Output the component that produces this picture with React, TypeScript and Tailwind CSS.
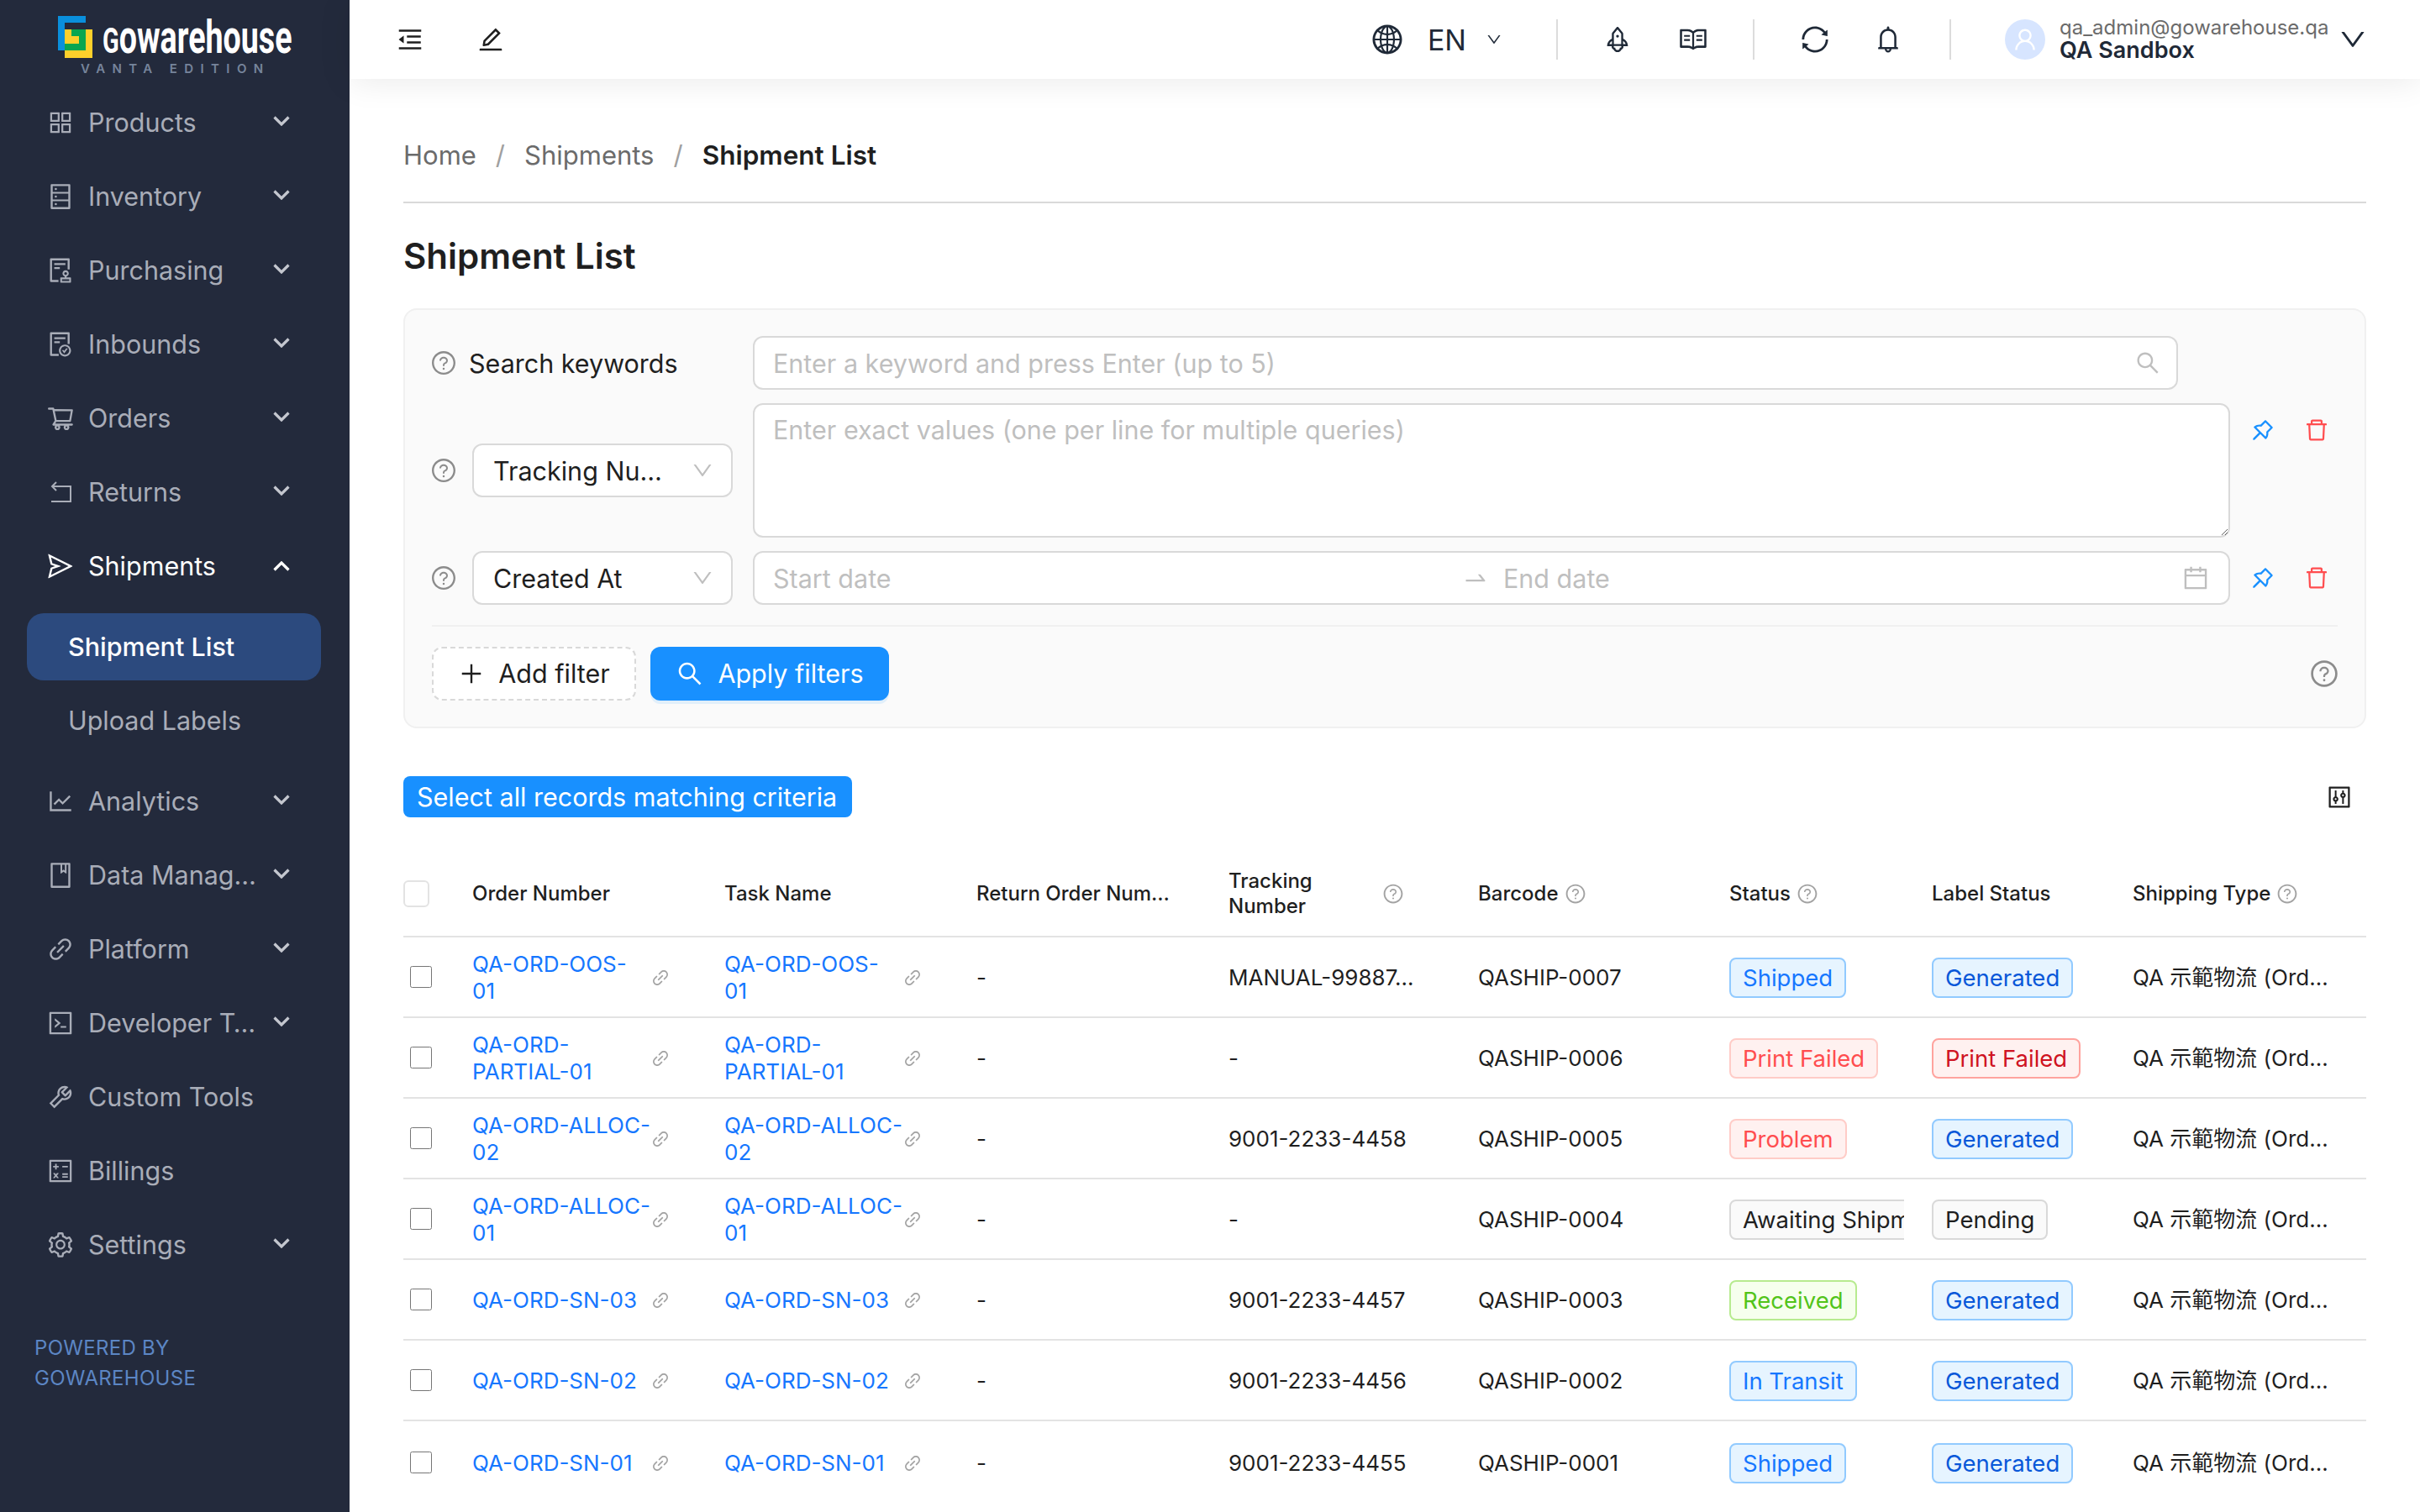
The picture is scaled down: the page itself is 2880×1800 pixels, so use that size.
import type { ReactNode } from 'react';
import {
  AiOutlineAppstore, AiOutlineAudit, AiOutlineBell, AiOutlineBook, AiOutlineCalculator, AiOutlineCalendar,
  AiOutlineCode, AiOutlineControl, AiOutlineDatabase, AiOutlineDelete, AiOutlineDown, AiOutlineEdit, AiOutlineFileDone,
  AiOutlineGlobal, AiOutlineLineChart, AiOutlineLink, AiOutlineMenuFold, AiOutlinePlus, AiOutlinePushpin,
  AiOutlineQuestionCircle, AiOutlineRead, AiOutlineRocket, AiOutlineSearch, AiOutlineSend, AiOutlineSetting,
  AiOutlineShoppingCart, AiOutlineSwapRight, AiOutlineSync, AiOutlineTool, AiOutlineUser,
} from 'react-icons/ai';

function ReturnIcon() {
  return (
    <svg width="30" height="30" viewBox="0 0 30 30" fill="none" stroke="currentColor" strokeWidth="2">
      <path d="M4 26h23V8H6M10 3 5 8l5 5" />
    </svg>
  );
}

function Chevron({ up }: { up?: boolean }) {
  return (
    <svg width="20" height="12" viewBox="0 0 20 12" fill="none" stroke="currentColor" strokeWidth="3.2" className={up ? 'rotate-180' : ''}>
      <path d="M1.500 1.500 10 10l8.500-8.500" />
    </svg>
  );
}

function Logo() {
  return (
    <div className="relative h-[102px] shrink-0">
      <svg width="41" height="50" viewBox="0 0 41 50" className="absolute left-[69px] top-[19px]">
        <path d="M0 0H33V8H8V41H0Z" fill="#0a8fdc" />
        <rect x="8" y="16" width="33" height="34" fill="#fdd02b" />
        <path d="M16 16H33V41H8V33H25V24H16Z" fill="#08a650" />
      </svg>
      <div className="absolute left-[122px] top-[19px] origin-left scale-x-[0.672] whitespace-nowrap text-[56px] leading-[50px] font-bold text-white font-['Roboto',sans-serif]"><span className="text-[43px]">G</span>owarehouse</div>
      <div className="absolute left-[96px] top-[72px] whitespace-nowrap text-[15px] leading-[20px] font-semibold tracking-[8.400px] text-[#76849b]">VANTA EDITION</div>
    </div>
  );
}

const topNav: [string, ReactNode][] = [
  ['Products', <AiOutlineAppstore size={34} />],
  ['Inventory', <AiOutlineDatabase size={34} />],
  ['Purchasing', <AiOutlineAudit size={34} />],
  ['Inbounds', <AiOutlineFileDone size={34} />],
  ['Orders', <AiOutlineShoppingCart size={34} />],
  ['Returns', <ReturnIcon />],
];

const bottomNav: [string, ReactNode, boolean][] = [
  ['Analytics', <AiOutlineLineChart size={34} />, true],
  ['Data Manag…', <AiOutlineBook size={34} />, true],
  ['Platform', <AiOutlineLink size={34} />, true],
  ['Developer T…', <AiOutlineCode size={34} />, true],
  ['Custom Tools', <AiOutlineTool size={34} />, false],
  ['Billings', <AiOutlineCalculator size={34} />, false],
  ['Settings', <AiOutlineSetting size={34} />, true],
];

function NavItem({ label, icon, arrow = true, open }: { label: string; icon: ReactNode; arrow?: boolean; open?: boolean }) {
  return (
    <div className={`flex h-[88px] items-center pl-[55px] pr-[71px] text-[30.500px] ${open ? 'text-white' : 'text-[#a9adb8]'}`}>
      <span className="flex w-[34px] shrink-0 justify-center">{icon}</span>
      <span className="ml-[16px] whitespace-nowrap">{label}</span>
      {arrow && <span className={`ml-auto flex ${open ? '' : 'mb-[4px] text-[#c4c7cf]'}`}><Chevron up={open} /></span>}
    </div>
  );
}

function Sidebar() {
  return (
    <aside className="flex h-full w-[416px] shrink-0 flex-col bg-[#232a3c]">
      <Logo />
      {topNav.map(([label, icon]) => <NavItem key={label} label={label} icon={icon} />)}
      <NavItem label="Shipments" icon={<AiOutlineSend size={36} />} open />
      <div className="mx-[32px] mt-[12px] flex h-[80px] w-[350px] items-center rounded-[20px] bg-[#2c4a7e] pl-[49px] text-[30.500px] font-medium text-white">Shipment List</div>
      <div className="mb-[12px] mt-[8px] flex h-[80px] items-center pl-[81px] text-[30.500px] text-[#a9adb8]">Upload Labels</div>
      {bottomNav.map(([label, icon, arrow]) => <NavItem key={label} label={label} icon={icon} arrow={arrow} />)}
      <div className="ml-[41px] mt-[61px] text-[24px] leading-[36px] tracking-[0.3px] text-[#5c86c4]">
        <div>POWERED BY</div>
        <div>GOWAREHOUSE</div>
      </div>
    </aside>
  );
}

function Divider() {
  return <div className="h-[48px] w-[2px] bg-[#dcdcdc]" />;
}

function Topbar() {
  return (
    <header className="relative z-10 flex h-[94px] shrink-0 items-center justify-between bg-white pl-[55px] pr-[62px] shadow-[0_2px_40px_rgba(0,0,0,0.09)]">
      <div className="flex items-center text-[#1f1f1f]">
        <AiOutlineMenuFold size={34} />
        <AiOutlineEdit size={34} className="ml-[62px]" />
      </div>
      <div className="flex items-center text-[#1f2937]">
        <AiOutlineGlobal size={40} />
        <span className="ml-[28px] text-[34px]">EN</span>
        <AiOutlineDown size={20} className="ml-[23px]" />
        <div className="ml-[64px]"><Divider /></div>
        <AiOutlineRocket size={36} className="ml-[53px]" />
        <AiOutlineRead size={36} className="ml-[54px]" />
        <div className="ml-[53px]"><Divider /></div>
        <AiOutlineSync size={38} className="ml-[53px]" />
        <AiOutlineBell size={36} className="ml-[50px]" />
        <div className="ml-[55px]"><Divider /></div>
        <div className="ml-[64px] flex h-[48px] w-[48px] items-center justify-center rounded-full bg-[#d7e5ff] text-white">
          <AiOutlineUser size={32} />
        </div>
        <div className="ml-[17px] w-[316px] whitespace-nowrap">
          <div className="text-[24px] leading-[26px] text-[#6b6b6b]">qa_admin@gowarehouse.qa</div>
          <div className="text-[27px] leading-[28px] font-semibold">QA Sandbox</div>
        </div>
        <AiOutlineDown size={36} className="ml-[15px]" />
      </div>
    </header>
  );
}

function HelpIcon() {
  return <AiOutlineQuestionCircle size={32} className="-ml-[2px] shrink-0 text-[#8c8c8c]" />;
}

function Select({ value }: { value: string }) {
  return (
    <div className="flex h-[64px] w-[310px] shrink-0 items-center justify-between rounded-[12px] border-2 border-[#d9d9d9] bg-white pl-[23px] pr-[20px]">
      <span className="whitespace-nowrap pt-[2px]">{value}</span>
      <AiOutlineDown size={28} className="text-[#bfbfbf]" />
    </div>
  );
}

function RowActions() {
  return (
    <div className="ml-[23px] flex shrink-0 gap-[32px]">
      <AiOutlinePushpin size={32} className="text-[#1890ff]" />
      <AiOutlineDelete size={32} className="text-[#ff4d4f]" />
    </div>
  );
}

function FilterPanel() {
  return (
    <section className="mt-[38px] h-[500px] rounded-[16px] border-2 border-[#f0f0f0] bg-[#fafafa] px-[32px] pt-[31px] text-[30.500px] text-[#1f1f1f]">
      <div className="flex h-[64px] items-center">
        <HelpIcon />
        <span className="ml-[14px] w-[338px] whitespace-nowrap pt-[2px]">Search keywords</span>
        <div className="flex h-[64px] w-[1696px] items-center rounded-[12px] border-2 border-[#d9d9d9] bg-white pl-[22px] pr-[18px]">
          <input className="min-w-0 flex-1 bg-transparent pt-[2px] outline-none placeholder:text-[#bfbfbf]" placeholder="Enter a keyword and press Enter (up to 5)" />
          <AiOutlineSearch size={32} className="text-[#bfbfbf]" />
        </div>
      </div>
      <div className="mt-[16px] flex h-[160px]">
        <div className="flex items-center gap-[18px]">
          <HelpIcon />
          <Select value="Tracking Nu…" />
        </div>
        <textarea className="ml-[24px] h-[160px] w-[1758px] resize-y rounded-[12px] border-2 border-[#d9d9d9] bg-white px-[22px] pt-[8px] leading-[44px] outline-none placeholder:text-[#bfbfbf]" placeholder="Enter exact values (one per line for multiple queries)" />
        <div className="pt-[16px]"><RowActions /></div>
      </div>
      <div className="mt-[16px] flex h-[64px] items-center">
        <HelpIcon />
        <div className="ml-[18px]"><Select value="Created At" /></div>
        <div className="ml-[24px] flex h-[64px] w-[1758px] items-center rounded-[12px] border-2 border-[#d9d9d9] bg-white pl-[22px] pr-[22px] text-[#bfbfbf]">
          <span className="w-[820px] pt-[2px]">Start date</span>
          <AiOutlineSwapRight size={32} />
          <span className="ml-[17px] pt-[2px]">End date</span>
          <AiOutlineCalendar size={34} className="ml-auto" />
        </div>
        <RowActions />
      </div>
      <div className="mt-[24px] h-[2px] bg-[#f0f0f0]" />
      <div className="mt-[24px] flex items-center justify-between">
        <div className="flex gap-[17px]">
          <button className="flex h-[64px] w-[243px] items-center justify-center gap-[16px] rounded-[12px] border-2 border-dashed border-[#d9d9d9] bg-white">
            <AiOutlinePlus size={32} />
            Add filter
          </button>
          <button className="flex h-[64px] w-[284px] items-center justify-center gap-[16px] rounded-[12px] bg-[#1890ff] text-white shadow-[0_4px_0_rgba(5,145,255,0.1)]">
            <AiOutlineSearch size={34} />
            Apply filters
          </button>
        </div>
        <AiOutlineQuestionCircle size={36} className="-mr-[2px] text-[#8c8c8c]" />
      </div>
    </section>
  );
}

const cols = 'grid grid-cols-[82px_300px_300px_300px_297px_299px_241px_239px_278px]';

const tagStyles: Record<string, string> = {
  blue: 'border-[#91caff] bg-[#e6f4ff] text-[#1677ff]',
  deep: 'border-[#91caff] bg-[#e6f4ff] text-[#0958d9]',
  red: 'border-[#ffccc7] bg-[#fff1f0] text-[#ff4d4f]',
  deepRed: 'border-[#ffa39e] bg-[#fff1f0] text-[#cf1322]',
  gray: 'border-[#d9d9d9] bg-[#fafafa] text-[#1f1f1f]',
  green: 'border-[#b7eb8f] bg-[#f6ffed] text-[#52c41a]',
};

function Tag({ text, tone }: { text: string; tone: string }) {
  return (
    <span className={`inline-flex h-[48px] shrink-0 items-center whitespace-nowrap rounded-[8px] border-2 px-[14px] text-[27.500px] ${tagStyles[tone]}`}>{text}</span>
  );
}

type Row = { order: string; tracking: string; barcode: string; status: [string, string]; label: [string, string] };

const rows: Row[] = [
  { order: 'QA-ORD-OOS-\n01', tracking: 'MANUAL-99887…', barcode: 'QASHIP-0007', status: ['Shipped', 'blue'], label: ['Generated', 'deep'] },
  { order: 'QA-ORD-PARTIAL-01', tracking: '-', barcode: 'QASHIP-0006', status: ['Print Failed', 'red'], label: ['Print Failed', 'deepRed'] },
  { order: 'QA-ORD-ALLOC-02', tracking: '9001-2233-4458', barcode: 'QASHIP-0005', status: ['Problem', 'red'], label: ['Generated', 'deep'] },
  { order: 'QA-ORD-ALLOC-01', tracking: '-', barcode: 'QASHIP-0004', status: ['Awaiting Shipment', 'gray'], label: ['Pending', 'gray'] },
  { order: 'QA-ORD-SN-03', tracking: '9001-2233-4457', barcode: 'QASHIP-0003', status: ['Received', 'green'], label: ['Generated', 'deep'] },
  { order: 'QA-ORD-SN-02', tracking: '9001-2233-4456', barcode: 'QASHIP-0002', status: ['In Transit', 'blue'], label: ['Generated', 'deep'] },
  { order: 'QA-ORD-SN-01', tracking: '9001-2233-4455', barcode: 'QASHIP-0001', status: ['Shipped', 'blue'], label: ['Generated', 'deep'] },
];

function OrderLink({ text }: { text: string }) {
  return (
    <div className="flex items-center">
      <span className="w-[212px] whitespace-pre-line text-[#1677ff]">{text}</span>
      <AiOutlineLink size={24} className="text-[#a3a3a3]" />
    </div>
  );
}

function SmallHelp() {
  return <AiOutlineQuestionCircle size={26} className="shrink-0 text-[#a3a3a3]" />;
}

function ShipmentTable() {
  return (
    <div className="mt-[40px] text-[26px] leading-[32px] text-[#1f1f1f]">
      <div className={`${cols} h-[103px] items-center border-b-2 border-[#e3e3e3] text-[24px] font-medium`}>
        <div className="h-[32px] w-[31px] rounded-[6px] border-2 border-[#e3e3e3]" />
        <div>Order Number</div>
        <div>Task Name</div>
        <div>Return Order Num…</div>
        <div className="flex items-center justify-between pr-[88px] leading-[30px]"><span>Tracking<br />Number</span><SmallHelp /></div>
        <div className="flex items-center gap-[7px]">Barcode <SmallHelp /></div>
        <div className="flex items-center gap-[7px]">Status <SmallHelp /></div>
        <div>Label Status</div>
        <div className="flex items-center gap-[7px]">Shipping Type <SmallHelp /></div>
      </div>
      {rows.map((r, i) => (
        <div key={r.barcode} className={`${cols} items-center pt-[2px] ${i === rows.length - 1 ? 'h-[98px]' : 'h-[96px] border-b-2 border-[#e3e3e3]'}`}>
          <div className="mb-[2px] pl-[8px]"><input type="checkbox" className="block h-[26px] w-[26px]" /></div>
          <OrderLink text={r.order} />
          <OrderLink text={r.order} />
          <div>-</div>
          <div>{r.tracking}</div>
          <div>{r.barcode}</div>
          <div className="flex w-[208px] overflow-hidden"><Tag text={r.status[0]} tone={r.status[1]} /></div>
          <div className="flex"><Tag text={r.label[0]} tone={r.label[1]} /></div>
          <div className="whitespace-nowrap">QA 示範物流 (Ord…</div>
        </div>
      ))}
    </div>
  );
}

export default function App() {
  return (
    <div className="flex h-screen w-full overflow-hidden bg-white font-['Inter','Noto_Sans_CJK_TC',sans-serif]">
      <Sidebar />
      <div className="flex min-w-0 flex-1 flex-col">
        <Topbar />
        <main className="flex-1 px-[64px]">
          <nav className="flex h-[148px] items-start gap-[23px] border-b-2 border-[#d9d9d9] pt-[71px] text-[31px] leading-[40px] text-[#6b6b6b]">
            <span>Home</span>
            <span className="text-[#a0a0a0]">/</span>
            <span>Shipments</span>
            <span className="text-[#a0a0a0]">/</span>
            <span className="text-[31.500px] font-semibold text-[#1f1f1f]">Shipment List</span>
          </nav>
          <h1 className="mt-[39px] text-[42px] leading-[48px] font-semibold text-[#1f1f1f]">Shipment List</h1>
          <FilterPanel />
          <div className="mt-[57px] flex items-center justify-between pr-[16px]">
            <div className="flex h-[49px] w-[534px] items-center rounded-[8px] bg-[#1890ff] pl-[16px] text-[30.500px] whitespace-nowrap text-white">Select all records matching criteria</div>
            <AiOutlineControl size={32} className="text-[#1f1f1f]" />
          </div>
          <ShipmentTable />
        </main>
      </div>
    </div>
  );
}
